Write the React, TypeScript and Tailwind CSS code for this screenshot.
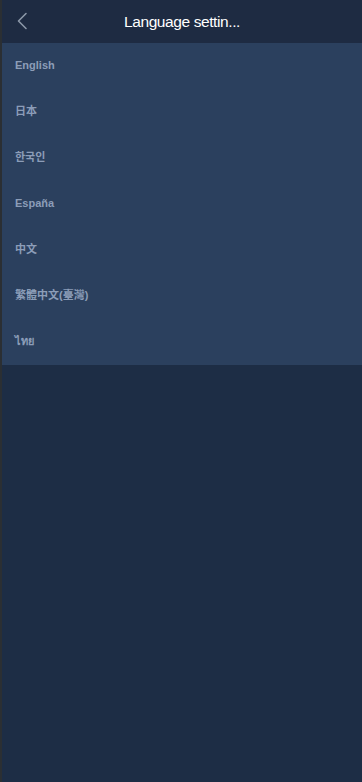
const LANGUAGES = ['English', '日本', '한국인', 'España', '中文', '繁體中文(臺灣)', 'ไทย'];

function BackIcon() {
  return (
    <svg width="12" height="18" viewBox="0 0 12 18" fill="none">
      <path d="M10 1.5 2.5 9l7.5 7.5" stroke="#8b97a8" strokeWidth="1.6" strokeLinecap="round" strokeLinejoin="round" />
    </svg>
  );
}

export default function App() {
  return (
    <div
      className="flex h-[782px] w-[362px] flex-col border-l-2 border-[#2b2f33] bg-[#1d2d45]"
      style={{ fontFamily: '"Liberation Sans", Arial, "Noto Sans CJK SC", "Noto Sans", sans-serif' }}
    >
      <header className="relative flex h-[43px] shrink-0 items-center justify-center bg-[#1e2b42]">
        <button className="absolute left-[14px] top-[12px]">
          <BackIcon />
        </button>
        <h1 className="text-[15.5px] tracking-[-0.4px] text-white">Language settin...</h1>
      </header>

      <ul className="bg-[#2b405e]">
        {LANGUAGES.map((lang) => (
          <li key={lang} className="flex h-[46px] items-center pl-[13px] pb-[2px] text-[11px] font-bold text-[#8c9db8]">
            {lang}
          </li>
        ))}
      </ul>
    </div>
  );
}
